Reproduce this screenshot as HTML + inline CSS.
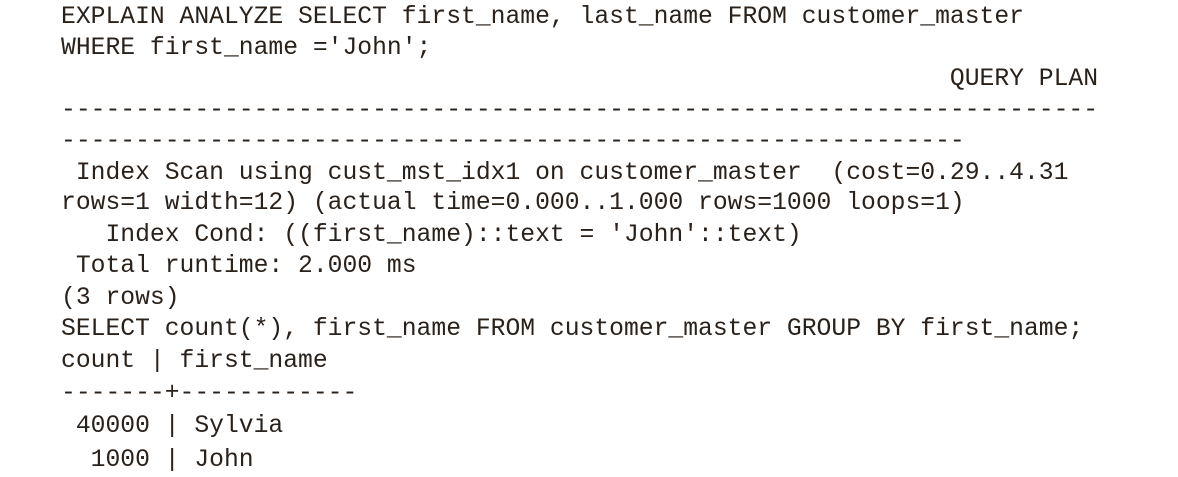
<!DOCTYPE html>
<html><head><meta charset="utf-8"><style>
body{margin:0;width:1178px;height:477px;background:#fff;overflow:hidden;position:relative}
.l{position:absolute;left:61px;font-family:"Liberation Mono",monospace;font-size:24.7px;line-height:31px;white-space:pre;color:#2a211b}
</style></head><body>
<div class="l" style="top:2px">EXPLAIN ANALYZE SELECT first_name, last_name FROM customer_master</div>
<div class="l" style="top:33px">WHERE first_name ='John';</div>
<div class="l" style="top:64px">                                                            QUERY PLAN</div>
<div class="l" style="top:95px">----------------------------------------------------------------------</div>
<div class="l" style="top:126px">-------------------------------------------------------------</div>
<div class="l" style="top:158px"> Index Scan using cust_mst_idx1 on customer_master  (cost=0.29..4.31</div>
<div class="l" style="top:188px">rows=1 width=12) (actual time=0.000..1.000 rows=1000 loops=1)</div>
<div class="l" style="top:220px">   Index Cond: ((first_name)::text = 'John'::text)</div>
<div class="l" style="top:251px"> Total runtime: 2.000 ms</div>
<div class="l" style="top:283px">(3 rows)</div>
<div class="l" style="top:314px">SELECT count(*), first_name FROM customer_master GROUP BY first_name;</div>
<div class="l" style="top:346px">count | first_name</div>
<div class="l" style="top:378px">-------+------------</div>
<div class="l" style="top:411px"> 40000 | Sylvia</div>
<div class="l" style="top:445px">  1000 | John</div>
</body></html>
